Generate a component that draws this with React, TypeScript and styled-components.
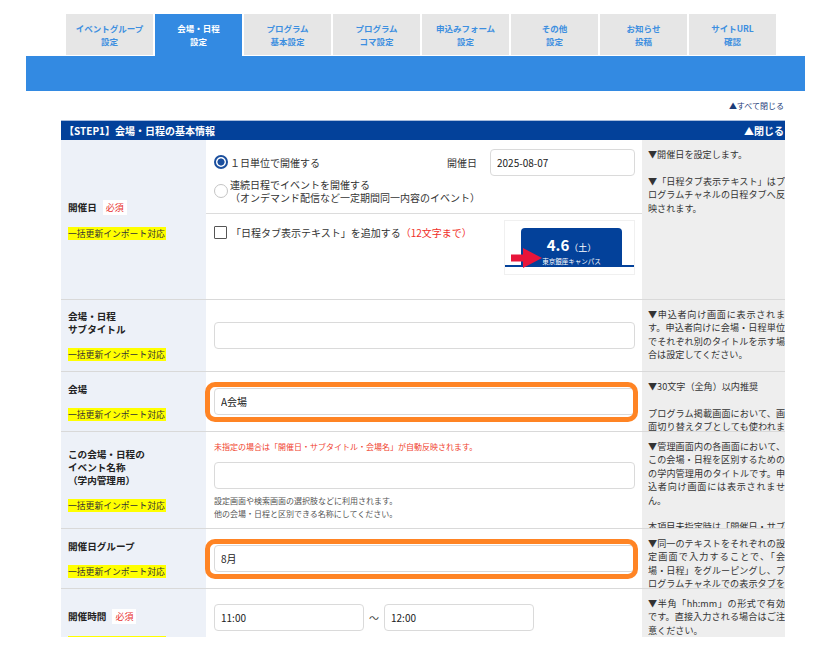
import React from 'react'
import styled, { createGlobalStyle } from 'styled-components'

const GlobalStyle = createGlobalStyle`
  body {
    margin: 0;
    background: #fff;
    font-family: "Noto Sans CJK JP", "Noto Sans", sans-serif;
    color: #333;
  }
`

const tabs = [
  ['イベントグループ', '設定'],
  ['会場・日程', '設定'],
  ['プログラム', '基本設定'],
  ['プログラム', 'コマ設定'],
  ['申込みフォーム', '設定'],
  ['その他', '設定'],
  ['お知らせ', '投稿'],
  ['サイトURL', '確認'],
]

// one entry per visual line, '' = blank line
const help = {
  date: ['▼開催日を設定します。', '', '▼「日程タブ表示テキスト」はプ', 'ログラムチャネルの日程タブへ反', '映されます。'],
  subtitle: ['▼申込者向け画面に表示されま', 'す。申込者向けに会場・日程単位', 'でそれぞれ別のタイトルを示す場', '合は設定してください。'],
  venue: ['▼30文字（全角）以内推奨', '', 'プログラム掲載画面において、画', '面切り替えタブとしても使われま'],
  name: ['▼管理画面内の各画面において、', 'この会場・日程を区別するための', 'の学内管理用のタイトルです。申', '込者向け画面には表示されませ', 'ん。', '', '本項目未指定時は「開催日・サブ'],
  group: ['▼同一のテキストをそれぞれの設', '定画面で入力することで、「会', '場・日程」をグルーピングし、プ', 'ログラムチャネルでの表示タブを'],
  time: ['▼半角「hh:mm」の形式で有効', 'です。直接入力される場合はご注', '意ください。'],
}

// paragraph-ending lines are left aligned, the rest are justified
const isEnd = (line: string) => /[。奨]$/.test(line)

interface RowProps {
  label: string[],
  required?: boolean,
  helpLines: string[],
  h: number,
  top?: number,
  flush?: boolean,
  children?: React.ReactNode,
}

const FormRow: React.FC<RowProps> = ({ label, required, helpLines, h, top, flush, children }) => {
  return (
    <Row $h={h}>
      <LabelCell>
        <LabelTitle>
          <span>
            {label.map((l, i) => (
              <React.Fragment key={i}>{i > 0 && <br />}{l}</React.Fragment>
            ))}
          </span>
          {required && <Required>必須</Required>}
        </LabelTitle>
        <ImportBadge>一括更新インポート対応</ImportBadge>
      </LabelCell>
      {flush ? <FlushCell>{children}</FlushCell> : <MainCell $top={top}>{children}</MainCell>}
      <HelpCell>
        {helpLines.map((line, i) => (
          <HelpLine key={i} $justify={line !== '' && !isEnd(line)}>
            {line || '\u00a0'}
          </HelpLine>
        ))}
      </HelpCell>
    </Row>
  )
}

const App: React.FC = () => {
  return (
    <Page>
      <GlobalStyle />
      <TabBar>
        {tabs.map(([a, b], i) => (
          <Tab key={i} $active={i === 1}>
            <span>{a}</span>
            <span>{b}</span>
          </Tab>
        ))}
      </TabBar>
      <BlueBar />
      <CloseAll>▲すべて閉じる</CloseAll>
      <Section>
        <SectionHeader>
          <span>【STEP1】会場・日程の基本情報</span>
          <span>▲閉じる</span>
        </SectionHeader>

        <FormRow label={['開催日']} required helpLines={help.date} h={160} flush>
          <DateBlock>
            <TopLine>
              <RadioLabel>
                <Radio $checked />
                <span>１日単位で開催する</span>
              </RadioLabel>
              <DateField>
                <span>開催日</span>
                <TextInput $w={145} defaultValue="2025-08-07" />
              </DateField>
            </TopLine>
            <RadioLabel $second>
              <Radio />
              <RadioText>
                <span>連続日程でイベントを開催する</span>
                <span>（オンデマンド配信など一定期間同一内容のイベント）</span>
              </RadioText>
            </RadioLabel>
          </DateBlock>
          <TabTextBlock>
            <CheckLine>
              <Checkbox />
              <span>「日程タブ表示テキスト」を追加する<Red>（12文字まで）</Red></span>
            </CheckLine>
            <Preview>
              <DayTab>
                <DayDate>4.6<small>（土）</small></DayDate>
                <DayPlace>東京銀座キャンパス</DayPlace>
              </DayTab>
              <DayLine />
              <Arrow width="31" height="20" viewBox="0 0 31 20">
                <polygon points="0,6.5 12,6.5 12,0 31,10 12,20 12,13.5 0,13.5" fill="#e8153a" />
              </Arrow>
            </Preview>
          </TabTextBlock>
        </FormRow>

        <FormRow label={['会場・日程', 'サブタイトル']} helpLines={help.subtitle} h={72}>
          <TextInput />
        </FormRow>

        <FormRow label={['会場']} helpLines={help.venue} h={60}>
          <Highlight>
            <TextInput defaultValue="A会場" />
          </Highlight>
        </FormRow>

        <FormRow label={['この会場・日程の', 'イベント名称', '（学内管理用）']} helpLines={help.name} h={97}>
          <Notice>未指定の場合は「開催日・サブタイトル・会場名」が自動反映されます。</Notice>
          <TextInput />
          <Note>設定画面や検索画面の選択肢などに利用されます。<br />他の会場・日程と区別できる名称にしてください。</Note>
        </FormRow>

        <FormRow label={['開催日グループ']} helpLines={help.group} h={60}>
          <Highlight>
            <TextInput defaultValue="8月" />
          </Highlight>
        </FormRow>

        <FormRow label={['開催時間']} required helpLines={help.time} h={80} top={15}>
          <TimeRange>
            <TextInput $w={150} defaultValue="11:00" />
            <Tilde>〜</Tilde>
            <TextInput $w={150} defaultValue="12:00" />
          </TimeRange>
        </FormRow>
      </Section>
    </Page>
  )
}

const Page = styled.div`
  width: 836px;
  height: 637px;
  overflow: hidden;
  box-sizing: border-box;
  padding: 14px 31px 0 26px;
`

const TabBar = styled.div`
  display: flex;
  gap: 2px;
  margin-left: 40px;
`

const Tab = styled.div<{ $active?: boolean }>`
  width: 87px;
  height: 42px;
  box-sizing: border-box;
  display: flex;
  flex-direction: column;
  align-items: center;
  justify-content: center;
  font-size: 8.5px;
  font-weight: 700;
  line-height: 13px;
  background: ${p => (p.$active ? '#338ae2' : '#e6e6e6')};
  color: ${p => (p.$active ? '#fff' : '#3d8fe0')};
  border-bottom: ${p => (p.$active ? 'none' : '1px solid #fff')};
`

const BlueBar = styled.div`
  height: 35px;
  background: #338ae2;
`

const CloseAll = styled.div`
  width: 724px;
  margin-left: 35px;
  box-sizing: border-box;
  padding: 9px 1px 8px 0;
  text-align: right;
  font-size: 8px;
  line-height: 12px;
  color: #1c3b78;
`

const Section = styled.section`
  width: 724px;
  margin-left: 35px;
`

const SectionHeader = styled.div`
  height: 20px;
  box-sizing: border-box;
  border-top: 1px solid #a8bcdc;
  background: #03419a;
  color: #fff;
  display: flex;
  justify-content: space-between;
  align-items: center;
  padding: 0 1px 0 3px;
  font-size: 10px;
  font-weight: 700;
`

const Row = styled.div<{ $h: number }>`
  display: grid;
  grid-template-columns: 145px 436px 143px;
  height: ${p => p.$h}px;
  box-sizing: border-box;
  border-bottom: 1px solid #d9d9d9;
`

const LabelCell = styled.div`
  background: #edf1f8;
  padding-left: 7px;
  display: flex;
  flex-direction: column;
  justify-content: center;
`

const LabelTitle = styled.div`
  display: flex;
  align-items: center;
  font-size: 9.6px;
  font-weight: 700;
  line-height: 13px;
  color: #222;
`

const Required = styled.span`
  background: #fff;
  color: #e8312f;
  font-size: 9px;
  font-weight: 400;
  line-height: 15px;
  padding: 0 3px;
  margin-left: 6px;
`

const ImportBadge = styled.span`
  align-self: flex-start;
  margin-top: 12px;
  background: #ffff00;
  color: #333;
  font-size: 8.8px;
  line-height: 13px;
  padding: 0 1px 0 0;
`

const MainCell = styled.div<{ $top?: number }>`
  display: flex;
  flex-direction: column;
  justify-content: ${p => (p.$top ? 'flex-start' : 'center')};
  padding: ${p => p.$top || 0}px 7px 0 8px;
  font-size: 10px;
  color: #333;
`

const FlushCell = styled.div`
  display: flex;
  flex-direction: column;
  font-size: 10px;
  color: #333;
`

const HelpCell = styled.div`
  background: #eeeeee;
  padding: 8px 0 0 6px;
  overflow: hidden;
`

const HelpLine = styled.div<{ $justify?: boolean }>`
  width: 137px;
  font-size: 9.1px;
  line-height: 13.4px;
  color: #333;
  overflow: hidden;
  height: 13.4px;
  text-align: ${p => (p.$justify ? 'justify' : 'left')};
  text-align-last: ${p => (p.$justify ? 'justify' : 'left')};
`

const TextInput = styled.input<{ $w?: number }>`
  display: block;
  width: ${p => (p.$w ? `${p.$w}px` : '100%')};
  height: 27px;
  box-sizing: border-box;
  border: 1px solid #dadada;
  border-radius: 4px;
  padding: 0 6px;
  font-family: inherit;
  font-size: 10px;
  color: #222;
  background: #fff;
  outline: none;
`

const Highlight = styled.div`
  position: relative;
  &::after {
    content: '';
    position: absolute;
    left: -9px;
    right: -3px;
    top: -6px;
    bottom: -7px;
    border: 5px solid #ff8424;
    border-radius: 10px;
    pointer-events: none;
  }
`

const DateBlock = styled.div`
  height: 74px;
  box-sizing: border-box;
  border-bottom: 1px solid #dcdcdc;
  padding: 9px 7px 0 8px;
`

const TopLine = styled.div`
  display: flex;
  justify-content: space-between;
  align-items: center;
  height: 26px;
`

const RadioLabel = styled.div<{ $second?: boolean }>`
  display: flex;
  align-items: center;
  gap: 2px;
  line-height: 13px;
  margin-top: ${p => (p.$second ? '3px' : '0')};
`

const RadioText = styled.div`
  display: flex;
  flex-direction: column;
`

const Radio = styled.span<{ $checked?: boolean }>`
  flex: none;
  width: 14px;
  height: 14px;
  box-sizing: border-box;
  border-radius: 50%;
  border: ${p => (p.$checked ? '2px solid #1b4f9e' : '1px solid #c4c4c4')};
  background: ${p => (p.$checked ? 'radial-gradient(circle, #1b4f9e 0 3.2px, #fff 3.9px)' : '#fff')};
`

const DateField = styled.div`
  display: flex;
  align-items: center;
  gap: 13px;
`

const TabTextBlock = styled.div`
  flex: 1;
  display: flex;
  justify-content: space-between;
  align-items: flex-start;
  padding: 6px 7px 0 8px;
`

const CheckLine = styled.div`
  display: flex;
  align-items: center;
  gap: 4px;
  margin-top: 6px;
  line-height: 13px;
`

const Checkbox = styled.span`
  flex: none;
  width: 13px;
  height: 13px;
  box-sizing: border-box;
  border: 1.5px solid #555;
  border-radius: 1px;
  background: #fff;
`

const Red = styled.span`
  color: #f0302a;
`

const Preview = styled.div`
  position: relative;
  width: 131px;
  height: 55px;
  box-sizing: border-box;
  border: 1px solid #f0f0f0;
  background: #fff;
  padding-top: 7px;
`

const DayTab = styled.div`
  margin-left: 16px;
  width: 101px;
  height: 37px;
  box-sizing: border-box;
  padding-top: 8px;
  background: #03419a;
  border-radius: 4px 4px 0 0;
  color: #fff;
  display: flex;
  flex-direction: column;
  align-items: center;
`

const DayDate = styled.div`
  font-size: 15px;
  font-weight: 700;
  line-height: 17px;
  small {
    font-size: 9px;
    font-weight: 400;
  }
`

const DayPlace = styled.div`
  font-size: 6.5px;
  line-height: 10px;
`

const DayLine = styled.div`
  height: 2px;
  background: #03419a;
`

const Arrow = styled.svg`
  position: absolute;
  left: 6px;
  top: 27px;
`

const Notice = styled.div`
  font-size: 8px;
  line-height: 12px;
  color: #f0432f;
  margin-bottom: 9px;
`

const Note = styled.div`
  font-size: 8px;
  line-height: 13px;
  color: #555;
  margin-top: 5px;
`

const TimeRange = styled.div`
  display: flex;
  align-items: center;
`

const Tilde = styled.span`
  margin: 0 5px;
  font-size: 10px;
  color: #444;
`

export default App
